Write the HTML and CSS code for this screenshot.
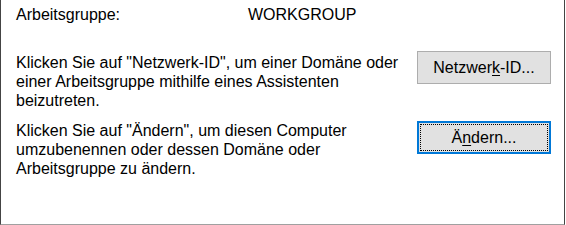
FILE: index.html
```
<!DOCTYPE html>
<html lang="de">
<head>
  <meta charset="UTF-8" />
  <title>Computername</title>
  <link rel="stylesheet" href="styles.css">
</head>
<body>

<div class="panel">
  <!-- Workgroup -->
  <div class="group-row">
    <span class="label">Arbeitsgruppe:</span>
    <span class="value">WORKGROUP</span>
  </div>

  <!-- Netzwerk-ID -->
  <div class="action-row netid">
    <p>Klicken Sie auf "Netzwerk-ID", um einer Domäne oder<br>einer Arbeitsgruppe mithilfe eines Assistenten<br>beizutreten.</p>
    <button class="btn">Netzwer<u>k</u>-ID...</button>
  </div>

  <!-- Ändern -->
  <div class="action-row change">
    <p>Klicken Sie auf "Ändern", um diesen Computer<br>umzubenennen oder dessen Domäne oder<br>Arbeitsgruppe zu ändern.</p>
    <button class="btn focused">Ä<u>n</u>dern...</button>
  </div>
</div>

</body>
</html>
```

FILE: styles.css
```
:root {
  --text: #000;
  --btn-bg: #e1e1e1;
  --btn-border: #adadad;
  --focus: #0078d7;
  --font: 'Liberation Sans', Arial, sans-serif;
}

* {
  box-sizing: border-box;
  margin: 0;
  padding: 0;
}

body {
  background: #fff;
  color: var(--text);
  font-family: var(--font);
  font-size: 16px;
  line-height: 19px;
}

.panel {
  width: 565px;
  height: 225px;
  border-left: 1px solid #444;
  border-right: 1px solid #444;
  border-bottom: 1px solid #a0a0a0;
  padding: 5px 13px 0 15px;
}

.group-row {
  display: grid;
  grid-template-columns: 232px auto;
}

.action-row {
  display: flex;
  justify-content: space-between;
  align-items: flex-start;
}

.action-row p {
  white-space: nowrap;
}

.netid {
  margin-top: 27px;
}

.netid p {
  padding-top: 2px;
}

.change {
  margin-top: 11px;
}

.btn {
  width: 134px;
  height: 33px;
  background: var(--btn-bg);
  border: 1px solid var(--btn-border);
  font-family: var(--font);
  font-size: 16px;
  color: var(--text);
  display: flex;
  align-items: center;
  justify-content: center;
}

.btn u {
  text-underline-offset: 2px;
}

.btn.focused {
  border-color: var(--focus);
  box-shadow: inset 0 0 0 1px var(--focus);
  outline: 1px dotted #000;
  outline-offset: -4px;
}
```
